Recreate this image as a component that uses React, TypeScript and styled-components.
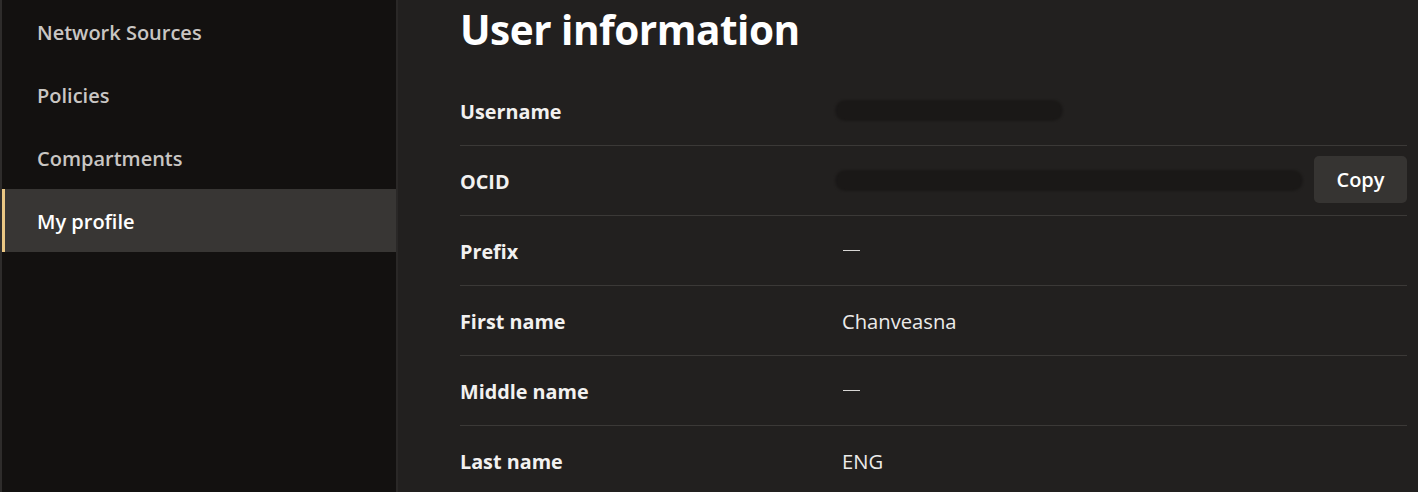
import React from 'react';
import styled, {createGlobalStyle} from 'styled-components';

const GlobalStyle = createGlobalStyle`
  html, body {
    margin: 0;
    padding: 0;
    background: #22201f;
    font-family: "Open Sans", "Noto Sans", sans-serif;
  }
  #root {
    height: 492px;
    overflow: hidden;
  }
`

const Page = styled.div`
  display: flex;
  height: 492px;
`

const Sidebar = styled.nav`
  width: 394px;
  flex-shrink: 0;
  background: #131110;
  border-left: 2px solid #2e2c2b;
  border-right: 2px solid #2a2827;
  display: flex;
  flex-direction: column;
`

const NavItem = styled.div<{active?: boolean}>`
  height: 63px;
  display: flex;
  align-items: center;
  padding: ${p => p.active ? '1px 0 0 32px' : '1px 0 0 35px'};
  box-sizing: border-box;
  border-left: ${p => p.active ? '3px solid #eac784' : 'none'};
  background: ${p => p.active ? '#383634' : 'transparent'};
  color: ${p => p.active ? '#ffffff' : '#c9c6c3'};
  font-size: 20px;
  font-weight: 600;
`

const Main = styled.main`
  flex: 1;
  padding: 0 11px 0 62px;
  background: #22201f;
`

const Title = styled.h1`
  margin: 0;
  height: 58px;
  display: flex;
  align-items: center;
  font-size: 40.5px;
  font-weight: 700;
  color: #ffffff;
  letter-spacing: -0.5px;
`

const Rows = styled.div`
  padding-top: 18px;
`

const Row = styled.div<{last?: boolean}>`
  height: 69px;
  display: flex;
  align-items: center;
  border-bottom: ${p => p.last ? 'none' : '1px solid #3b3937'};
`

const Label = styled.div`
  width: 382px;
  flex-shrink: 0;
  padding-top: 1px;
  font-size: 19.8px;
  font-weight: 700;
  color: #f2f1f0;
`

const Value = styled.div`
  flex: 1;
  display: flex;
  align-items: center;
  font-size: 20.2px;
  font-weight: 400;
  color: #ecebea;
`

const Dash = styled.span`
  display: inline-block;
  width: 17px;
  height: 1px;
  margin: 0 0 1px 1px;
  background: #d8d6d4;
`

const Redacted = styled.div<{w: number}>`
  width: ${p => p.w}px;
  height: 21px;
  margin-left: -7px;
  border-radius: 11px;
  background: #1a1817;
  filter: blur(1px);
`

const CopyButton = styled.button`
  margin-left: auto;
  margin-bottom: 2px;
  width: 93px;
  height: 47px;
  border: none;
  border-radius: 5px;
  background: #363432;
  color: #ffffff;
  font-family: inherit;
  font-size: 20px;
  font-weight: 600;
  cursor: pointer;
`

const navItems = ['Network Sources', 'Policies', 'Compartments', 'My profile'];

const App = () => {
    return (
        <>
            <GlobalStyle/>
            <Page>
                <Sidebar>
                    {navItems.map(item => (
                        <NavItem key={item} active={item === 'My profile'}>{item}</NavItem>
                    ))}
                </Sidebar>
                <Main>
                    <Title>User information</Title>
                    <Rows>
                        <Row>
                            <Label>Username</Label>
                            <Value><Redacted w={228}/></Value>
                        </Row>
                        <Row>
                            <Label>OCID</Label>
                            <Value>
                                <Redacted w={468}/>
                                <CopyButton>Copy</CopyButton>
                            </Value>
                        </Row>
                        <Row>
                            <Label>Prefix</Label>
                            <Value><Dash/></Value>
                        </Row>
                        <Row>
                            <Label>First name</Label>
                            <Value>Chanveasna</Value>
                        </Row>
                        <Row>
                            <Label>Middle name</Label>
                            <Value><Dash/></Value>
                        </Row>
                        <Row last>
                            <Label>Last name</Label>
                            <Value>ENG</Value>
                        </Row>
                    </Rows>
                </Main>
            </Page>
        </>
    );
}

export default App;
